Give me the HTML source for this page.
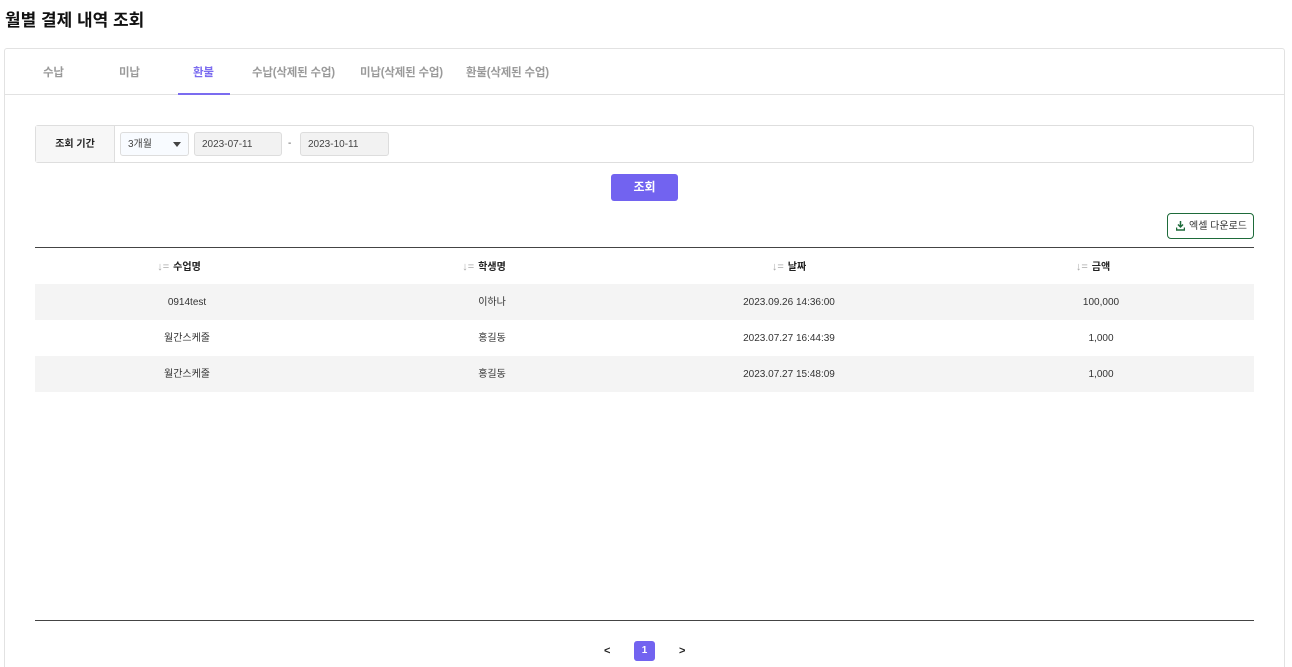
<!DOCTYPE html>
<html style="width:1292px;height:667px;overflow:hidden"><head><meta charset="utf-8"><style>
*{box-sizing:border-box;margin:0;padding:0}
body{width:1292px;height:667px;overflow:hidden;background:#fff;font-family:"Liberation Sans","Noto Sans CJK KR",sans-serif;position:relative;color:#222}
.abs{position:absolute}
h1{position:absolute;left:5px;top:6px;font-size:17px;font-weight:bold;color:#111}
.card{position:absolute;left:4px;top:48px;width:1281px;height:630px;border:1px solid #e2e2e2;border-radius:3px}
.tabs{position:absolute;left:0;top:0;width:100%;height:46px;border-bottom:1px solid #e2e2e2}
.tab{position:absolute;top:15px;font-size:11.5px;font-weight:bold;color:#9a9a9a;text-align:center;letter-spacing:-0.2px}
.tab.on{color:#7b6cf0}
.ul{position:absolute;left:173px;top:44px;width:52px;height:2px;background:#7b6cf0}
.filter{position:absolute;left:35px;top:125px;width:1219px;height:38px;border:1px solid #dedede;border-radius:3px}
.lab{position:absolute;left:0;top:0;width:79px;height:36px;background:#f7f7f7;border-right:1px solid #dedede;font-size:10px;font-weight:bold;text-align:center;line-height:37px}
.box{position:absolute;top:6px;height:24px;border:1px solid #ddd;border-radius:3px;font-size:10px;line-height:24px;padding-left:7px;color:#444}
.btn{position:absolute;left:611px;top:174px;width:67px;height:27px;background:#7263f0;color:#fff;border-radius:3px;font-size:12px;font-weight:bold;text-align:center;line-height:27px}
.xl{position:absolute;left:1167px;top:213px;width:87px;height:26px;border:1px solid #1e6b3a;border-radius:4px;font-size:10px;color:#333;line-height:25px;padding-left:21px}
.row{position:absolute;left:35px;width:1219px;height:36px;font-size:10px;color:#333}
.row span{position:absolute;top:1px;line-height:36px;transform:translateX(-50%);white-space:nowrap}
.g{background:#f4f4f4}
.hd span{font-weight:bold;color:#222}
.si{color:#aaa;font-weight:normal;margin-right:4px;font-size:11px;font-style:normal}
</style></head><body>
<h1>월별 결제 내역 조회</h1>
<div class="card">
 <div class="tabs">
  <div class="tab" style="left:38px">수납</div>
  <div class="tab" style="left:114px">미납</div>
  <div class="tab on" style="left:188px">환불</div>
  <div class="tab" style="left:247px">수납(삭제된 수업)</div>
  <div class="tab" style="left:355px">미납(삭제된 수업)</div>
  <div class="tab" style="left:461px">환불(삭제된 수업)</div>
  <div class="ul"></div>
 </div>
</div>
<div class="filter">
 <div class="lab">조회 기간</div>
 <div class="box" style="left:84px;width:69px;background:#f8fbff">3개월<svg class="abs" style="left:52px;top:9px" width="8" height="5"><path d="M0 0H8L4 5Z" fill="#444"/></svg></div>
 <div class="box" style="left:158px;width:88px;background:#f2f2f2">2023-07-11</div>
 <div class="abs" style="left:252px;top:12px;font-size:10px;color:#555">-</div>
 <div class="box" style="left:264px;width:89px;background:#f2f2f2">2023-10-11</div>
</div>
<div class="btn">조회</div>
<div class="xl"><svg class="abs" style="left:8px;top:7px" width="9" height="10"><path d="M4.5 0V6M2 3.5L4.5 6L7 3.5M0.5 6.5V9H8.5V6.5" stroke="#1e6b3a" stroke-width="1.5" fill="none"/></svg>엑셀 다운로드</div>
<div class="abs" style="left:35px;top:247px;width:1219px;height:1px;background:#444"></div>
<div class="row hd" style="top:248px"><span style="left:144px"><i class="si">↓=</i>수업명</span><span style="left:449px"><i class="si">↓=</i>학생명</span><span style="left:754px"><i class="si">↓=</i>날짜</span><span style="left:1058px"><i class="si">↓=</i>금액</span></div>
<div class="row g" style="top:284px"><span style="left:152px">0914test</span><span style="left:457px">이하나</span><span style="left:754px">2023.09.26 14:36:00</span><span style="left:1066px">100,000</span></div>
<div class="row" style="top:320px"><span style="left:152px">월간스케줄</span><span style="left:457px">홍길동</span><span style="left:754px">2023.07.27 16:44:39</span><span style="left:1066px">1,000</span></div>
<div class="row g" style="top:356px"><span style="left:152px">월간스케줄</span><span style="left:457px">홍길동</span><span style="left:754px">2023.07.27 15:48:09</span><span style="left:1066px">1,000</span></div>
<div class="abs" style="left:35px;top:620px;width:1219px;height:1px;background:#444"></div>
<div class="abs" style="left:604px;top:645px;font-size:11px;font-weight:bold">&lt;</div>
<div class="abs" style="left:634px;top:641px;width:21px;height:20px;background:#7263f0;border-radius:3px;color:#fff;font-size:10px;font-weight:bold;text-align:center;line-height:20px">1</div>
<div class="abs" style="left:679px;top:645px;font-size:11px;font-weight:bold">&gt;</div>
</body></html>
